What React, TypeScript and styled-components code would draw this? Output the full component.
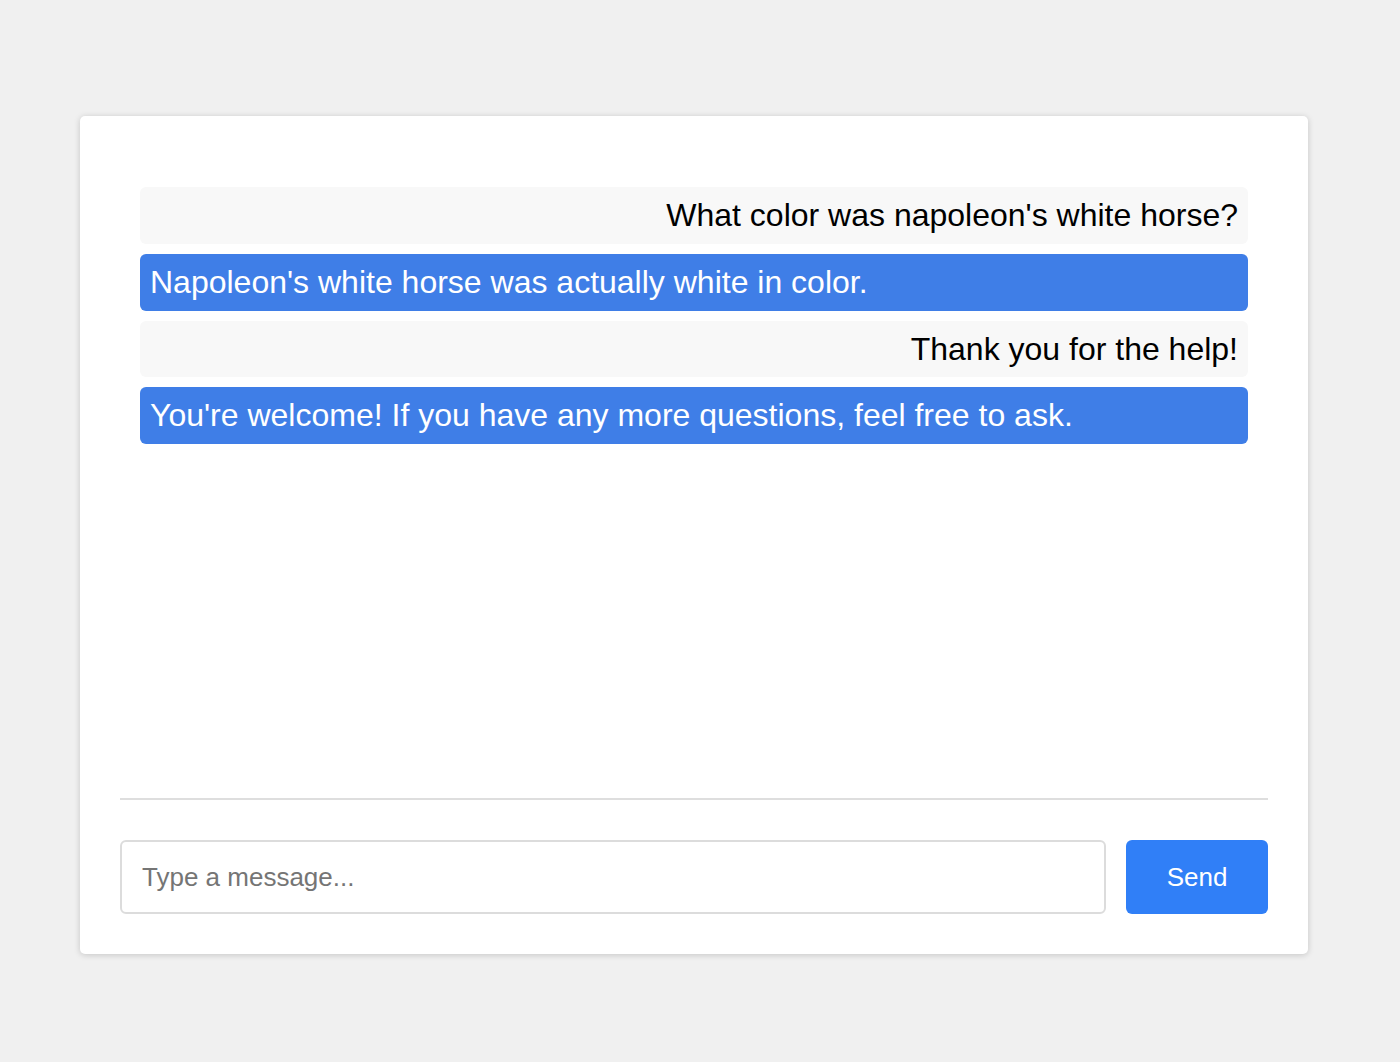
import React from "react";
import styled, { createGlobalStyle } from "styled-components";

const Global = createGlobalStyle`
  html, body { margin: 0; padding: 0; }
  body {
    background: #f0f0f0;
    font-family: "Liberation Sans", Arial, Helvetica, sans-serif;
  }
  * { box-sizing: border-box; }
`;

const Page = styled.div`
  height: 100vh;
  padding: 116px 92px 108px 80px;
  display: flex;
`;

const Card = styled.div`
  flex: 1;
  display: flex;
  flex-direction: column;
  background: #fff;
  border-radius: 5px;
  box-shadow: 0 1px 6px rgba(0, 0, 0, 0.18);
  padding: 0 40px 40px;
`;

const MessageList = styled.div`
  flex: 1;
  display: flex;
  flex-direction: column;
  gap: 10px;
  padding: 71px 20px 20px;
`;

const Bubble = styled.div<{ $bot?: boolean }>`
  padding: 10px;
  border-radius: 6px;
  font-size: 32px;
  line-height: 1.15;
  text-align: ${(p) => (p.$bot ? "left" : "right")};
  background: ${(p) => (p.$bot ? "#3f7ee7" : "#f8f8f8")};
  color: ${(p) => (p.$bot ? "#fff" : "#000")};
`;

const Composer = styled.div`
  display: flex;
  gap: 20px;
  border-top: 2px solid #dedede;
  padding-top: 40px;
`;

const Input = styled.input`
  flex: 1;
  height: 74px;
  font-family: inherit;
  font-size: 26px;
  line-height: 1.15;
  padding: 0 20px;
  border: 2px solid #dcdcdc;
  border-radius: 6px;
  outline: none;
  &::placeholder { color: #757575; }
`;

const SendButton = styled.button`
  flex: 0 0 142px;
  height: 74px;
  font-family: inherit;
  font-size: 26px;
  padding: 0;
  border: none;
  border-radius: 6px;
  background: #307ff7;
  color: #fff;
`;

const messages = [
  { bot: false, text: "What color was napoleon's white horse?" },
  { bot: true, text: "Napoleon's white horse was actually white in color." },
  { bot: false, text: "Thank you for the help!" },
  { bot: true, text: "You're welcome! If you have any more questions, feel free to ask." },
];

export default function App() {
  return (
    <>
      <Global />
      <Page>
        <Card>
          <MessageList>
            {messages.map((m, i) => (
              <Bubble key={i} $bot={m.bot}>
                {m.text}
              </Bubble>
            ))}
          </MessageList>
          <Composer>
            <Input placeholder="Type a message..." />
            <SendButton>Send</SendButton>
          </Composer>
        </Card>
      </Page>
    </>
  );
}
